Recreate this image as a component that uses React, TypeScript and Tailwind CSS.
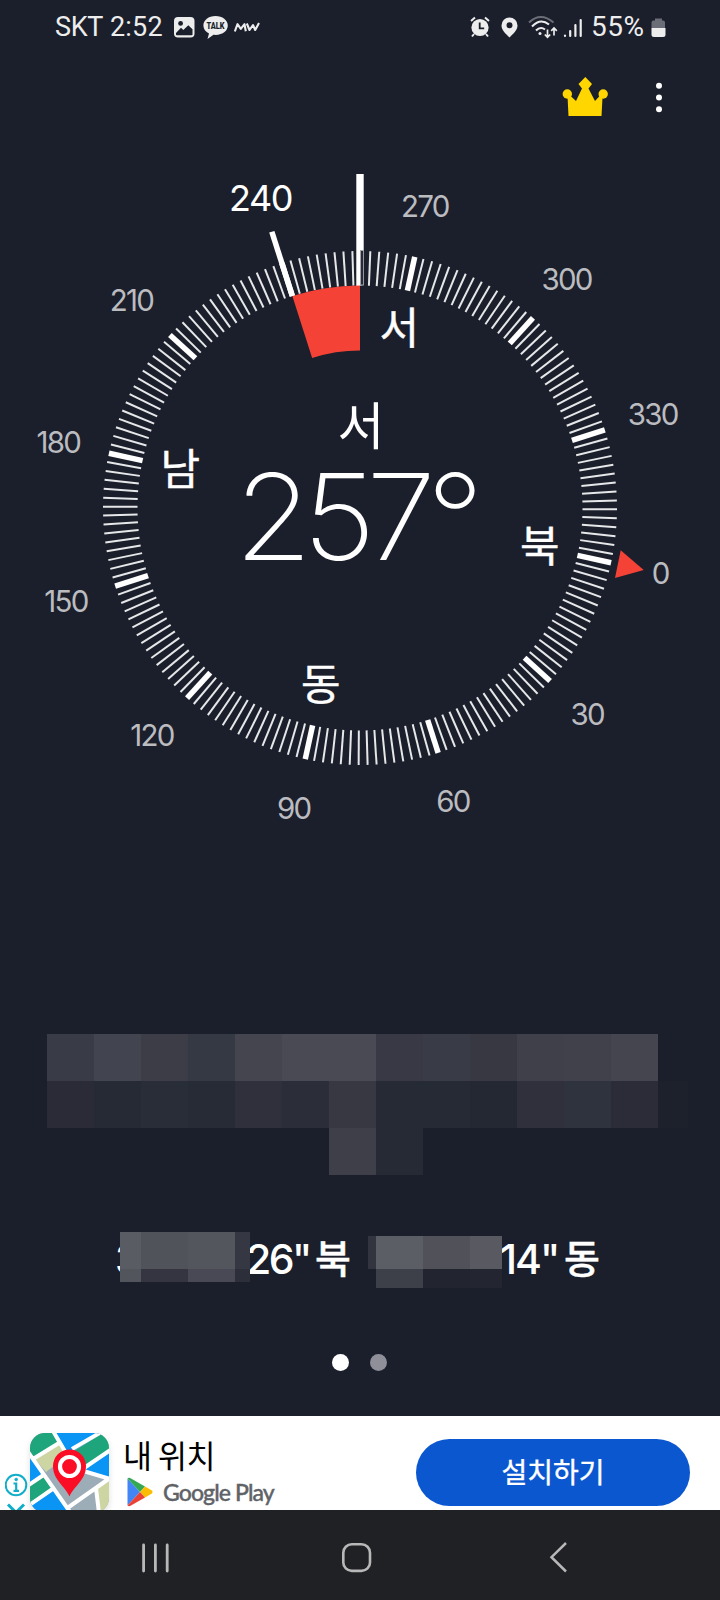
const CX = 360;
const CY = 368;
const HEADING = 257.7;
const MARKED = 240;

const OUTER = 257;
const INNER = 222.5;

function polar(deg: number, r: number): [number, number] {
  const rad = ((deg - HEADING) * Math.PI) / 180;
  return [CX + r * Math.sin(rad), CY - r * Math.cos(rad)];
}

const directions = [
  { deg: 0, name: "북", baseline: 15 },
  { deg: 90, name: "동", baseline: 12.5 },
  { deg: 180, name: "남", baseline: 16 },
  { deg: 270, name: "서", baseline: 15.5 },
];

const addressTop = [
  "bg-[#393c46]", "bg-[#42454f]", "bg-[#3d3d48]", "bg-[#353943]", "bg-[#44454f]",
  "bg-[#494a54]", "bg-[#494a54]", "bg-[#383944]", "bg-[#393c46]", "bg-[#373842]",
  "bg-[#3f404a]", "bg-[#40414b]", "bg-[#44454f]",
];

const addressMiddle = [
  "bg-[#2b2b38]", "bg-[#262a34]", "bg-[#292d37]", "bg-[#272b36]", "bg-[#2f303b]",
  "bg-[#2b2e38]", "bg-[#373842]", "bg-[#262a34]", "bg-[#262a34]", "bg-[#242833]",
  "bg-[#2f303c]", "bg-[#2f333d]", "bg-[#2c2c39]",
];

function StatusBar() {
  return (
    <header className="flex h-[54px] items-center pl-[55px] pr-[54px] font-['Roboto','Noto_Sans_CJK_KR',sans-serif] text-[27px] text-[#ededed]">
      <span className="w-[55px] whitespace-nowrap tracking-[-0.3px]">SKT</span>
      <span className="w-[63px] whitespace-nowrap tracking-[0.2px]">2:52</span>
      <svg width="22" height="22" viewBox="0 0 22 22" className="mr-2">
        <rect x="1" y="1" width="20.5" height="20.5" rx="4" fill="#ededed" />
        <circle cx="7.6" cy="7.4" r="2.4" fill="#1b1f2b" />
        <path d="M3 17l5-5.200 2.300 2.200 5-4.800 4.200 4v5.300q0 .8-.8.8H3.800Q3 19.300 3 18.500z" fill="#1b1f2b" />
      </svg>
      <svg width="26" height="25" viewBox="0 0 26 25" className="mr-[5px]">
        <path d="M12.500 1C5.500 1 .4 5.200.4 10.500c0 3.400 2.200 6.300 5.600 8L4.500 24l6-4.200c9 .8 14.300-4 14.300-9.300C24.800 5.200 19.500 1 12.500 1z" fill="#ededed" />
        <text x="12.600" y="13.800" textAnchor="middle" fontSize="8.500" fontWeight="900" fill="#1b1f2b" textLength="18" lengthAdjust="spacingAndGlyphs">TALK</text>
      </svg>
      <svg width="26" height="12" viewBox="0 0 26 12" fill="none" stroke="#ededed" strokeWidth="2.100" strokeLinejoin="round">
        <path d="M.8 10.500L3.500 3.200l3.300 4.600 3.700-4.600 1.300 7" />
        <path d="M12.800 2.500l2.700 6.500 3.500-5 2.200 5L25 2" />
      </svg>

      <div className="ml-auto flex items-center">
        <svg width="20" height="22" viewBox="0 0 20 22" className="mr-[11px]">
          <path d="M1 5l4-3.500M19 5l-4-3.500M4 18l-2 2.500M16 18l2 2.500" stroke="#ededed" strokeWidth="2" />
          <circle cx="10" cy="11.500" r="8.600" fill="#ededed" />
          <path d="M9.700 6.500v5.800h4.500" stroke="#1b1f2b" strokeWidth="1.800" fill="none" />
        </svg>
        <svg width="17" height="21" viewBox="0 0 17 21" className="mr-[9px]">
          <path fillRule="evenodd" d="M8.500.5A8 8 0 00.5 8.500C.5 13 4.500 16.500 8.500 20.500c4-4 8-7.500 8-12a8 8 0 00-8-8zm0 4.800a3 3 0 110 6 3 3 0 010-6z" fill="#ededed" />
        </svg>
        <svg width="32" height="24" viewBox="0 0 32 24" className="mr-[4px]" fill="none" strokeWidth="2">
          <path d="M2 7.500Q13.500-3.500 26.500 7.500" stroke="#6c6e77" />
          <path d="M5 11.500Q13.500 2.500 22 9.500M9 15.500q4.500-4.500 9-1" stroke="#ededed" />
          <circle cx="13" cy="18.500" r="1.500" fill="#ededed" />
          <path d="M20.500 14.500v7.500M17.800 19.500l2.700 2.700 2.700-2.700M27 20.500v-7.500M24.200 15.800l2.800-2.800 2.800 2.800" stroke="#ededed" strokeWidth="1.700" />
        </svg>
        <svg width="20" height="21" viewBox="0 0 20 21" className="mr-[8px]" stroke="#ededed" strokeWidth="2.200" strokeLinecap="round">
          <path d="M2 18.500v.5M7.200 14v5M12.400 8v11M17.700 3v16" />
        </svg>
        <span className="w-[60px] whitespace-nowrap text-[28px] tracking-[0.5px]">55%</span>
        <svg width="15" height="21" viewBox="0 0 15 21">
          <path d="M4 1.500h7v2h1a2 2 0 012 2V11H.5V5.500a2 2 0 012-2H4z" fill="#6c6e77" />
          <path d="M.5 11h14v6.500a2.500 2.500 0 01-2.500 2.500H3a2.500 2.500 0 01-2.500-2.500z" fill="#ededed" />
        </svg>
      </div>
    </header>
  );
}

function Toolbar() {
  return (
    <div className="flex h-[86px] items-start justify-end pr-[57px] pt-[22px]">
      <svg width="46" height="42" viewBox="0 0 46 42" fill="#ffd600">
        <path d="M23.300 1l6.700 7-3.500 4.500L33 25l6-6.500 1.500 3-1 18.500H6.500L5.500 20l1.500-1.500L14 25l6-12.500L16.500 8z" />
        <circle cx="5.300" cy="18" r="4.700" />
        <circle cx="41.200" cy="18" r="4.700" />
      </svg>
      <svg width="8" height="40" viewBox="0 0 8 40" className="ml-[47px]" fill="#fff">
        <circle cx="4" cy="9.700" r="3" />
        <circle cx="4" cy="21.500" r="3" />
        <circle cx="4" cy="33.200" r="3" />
      </svg>
    </div>
  );
}

function Dial() {
  const ticks = Array.from({ length: 180 }, (_, i) => i * 2);
  const labels = Array.from({ length: 12 }, (_, i) => i * 30);
  const [ax, ay] = polar(MARKED, INNER);
  const [bx, by] = polar(MARKED, 157.4);
  const [mx1, my1] = polar(MARKED, 290);
  const [mx2, my2] = polar(MARKED, INNER);

  return (
    <svg
      width="720"
      height="720"
      viewBox="0 0 720 720"
      className="shrink-0 font-['Inter','Noto_Sans_CJK_KR',sans-serif]"
    >
      {ticks.map((deg) => {
        const major = deg % 30 === 0;
        const [x1, y1] = polar(deg, INNER);
        const [x2, y2] = polar(deg, OUTER);
        return (
          <line
            key={deg}
            x1={x1}
            y1={y1}
            x2={x2}
            y2={y2}
            stroke={major ? "#fff" : "#e6e7e9"}
            strokeWidth={major ? 5.5 : 2}
          />
        );
      })}

      {/* Heading line, inverted where it crosses the nearest tick */}
      <rect x="356.300" y="34" width="7.400" height="77" fill="#fff" />
      <rect x="356.300" y="111" width="4" height="35" fill="#fff" />
      <rect x="360.600" y="110.500" width="2.800" height="34.500" fill="#1b1f2b" stroke="#a3a5ab" />

      <path
        d={`M${ax} ${ay}A${INNER} ${INNER} 0 0 1 ${CX} ${CY - INNER}V${CY - 157.4}A157.4 157.4 0 0 0 ${bx} ${by}Z`}
        fill="#f44336"
      />
      <line x1={mx1} y1={my1} x2={mx2} y2={my2} stroke="#fff" strokeWidth="5.500" />
      <path d="M620.700 410.300L643.700 430 615 438z" fill="#f44336" />

      {labels.map((deg) => {
        const marked = deg === MARKED;
        const [x, y] = polar(deg, marked ? 325 : 308);
        return (
          <text
            key={deg}
            x={x - 0.7}
            y={y + (marked ? 13 : 10.2)}
            textAnchor="middle"
            fontSize={marked ? 36 : 29.5}
            letterSpacing={marked ? -1.4 : -1.7}
            fill={marked ? "#fff" : "#bbbcc0"}
          >
            {deg}
          </text>
        );
      })}

      {directions.map(({ deg, name, baseline }) => {
        const [x, y] = polar(deg, 184);
        return (
          <text key={deg} x={x} y={y + baseline} textAnchor="middle" fontSize="43" fill="#fff" stroke="#fff" strokeWidth="0.400">
            {name}
          </text>
        );
      })}

      <text x="361" y="305" textAnchor="middle" fontSize="51" fill="#fff">
        서
      </text>
      <text
        transform="translate(234.500 420) scale(1.050 1)"
        fontSize="120"
        fontWeight="200"
        letterSpacing="-9"
        fill="#fff"
      >
        257°
      </text>
    </svg>
  );
}

function Address() {
  return (
    <div className="mt-[174px] flex h-[141px] flex-col pl-[47px]">
      <div className="flex">
        {addressTop.map((color, i) => (
          <div key={i} className={`size-[47px] ${color}`} />
        ))}
      </div>
      <div className="flex">
        {addressMiddle.map((color, i) => (
          <div key={i} className={`size-[47px] ${color}`} />
        ))}
        <div className="h-[47px] w-[30px] bg-[#1d212c]" />
      </div>
      <div className="flex pl-[282px]">
        <div className="size-[47px] bg-[#3f3f4a]" />
        <div className="size-[47px] bg-[#262a34]" />
      </div>
    </div>
  );
}

function Coordinates() {
  return (
    <div className="mt-[57px] flex h-[56px] pl-[115px] font-['Inter','Noto_Sans_CJK_KR',sans-serif] text-[41px] font-medium leading-[54px] text-white">
      <div className="flex w-[5px] justify-start overflow-hidden">
        <span>3</span>
      </div>
      <div className="grid h-[50px] grid-cols-[21px_47px_47px_15px] grid-rows-[37px_13px]">
        <div className="bg-[#5a5c64]" />
        <div className="bg-[#51535b]" />
        <div className="bg-[#54565e]" />
        <div className="bg-[#353742]" />
        <div className="bg-[#53555d]" />
        <div className="bg-[#343541]" />
        <div className="bg-[#484954]" />
        <div className="bg-[#2c2e39]" />
      </div>
      <div className="flex w-[118px] overflow-hidden whitespace-nowrap">
        <span className="-ml-[4px] w-[69px] tracking-[-2.6px]">26"</span>
        <span className="text-[39px] [-webkit-text-stroke:0.4px_white]">북</span>
      </div>
      <div className="mt-1 grid h-[52px] grid-cols-[8px_47px_47px_32px] grid-rows-[33px_19px]">
        <div className="bg-[#32343f]" />
        <div className="bg-[#5c5e66]" />
        <div className="bg-[#505159]" />
        <div className="bg-[#585961]" />
        <div />
        <div className="bg-[#3d3f49]" />
        <div className="bg-[#22252f]" />
        <div className="bg-[#232631]" />
      </div>
      <div className="flex overflow-hidden whitespace-nowrap">
        <span className="-ml-[2px] w-[64px] tracking-[-2px]">14"</span>
        <span className="text-[39px] [-webkit-text-stroke:0.4px_white]">동</span>
      </div>
    </div>
  );
}

function AppIcon() {
  return (
    <svg width="80" height="78" viewBox="0 0 80 78" className="shrink-0 drop-shadow-md">
      <defs>
        <clipPath id="tile">
          <rect width="79" height="80" rx="15" />
        </clipPath>
      </defs>
      <g clipPath="url(#tile)">
        <rect width="80" height="80" fill="#9cadb8" />
        <path d="M0 0h23l5 10L3 26 0 22z" fill="#1fa57b" />
        <path d="M23 0h50L40 20 30 14z" fill="#0a95f5" />
        <path d="M73 0h7v18L54 36 44 18z" fill="#1fa57b" />
        <path d="M80 17v29L55 37z" fill="#0a95f5" />
        <path d="M4 25l24-15 10 12-22 17z" fill="#cdd6a2" />
        <path d="M0 22l14 20L0 51z" fill="#0a95f5" />
        <path d="M0 52l14-9 10 13L0 72z" fill="#1fa57b" />
        <path d="M0 71l24-15 14 22v3H0z" fill="#0a95f5" />
        <path d="M66 55l14-10v35H69z" fill="#cdd6a2" />
        <g stroke="#fff" strokeWidth="4" fill="none">
          <path d="M-2 19l42 60M23-2l13 22M3 26l26-16M-2 52.500L15 41M-2 73l26-18" />
          <path d="M42 16L73-2M54 35l28-19M50 37l30 9M80 45L36 76M66 55l3 25" />
        </g>
        <path d="M39.500 63.500C35 53 23 47 23 33a16.500 16.500 0 0133 0c0 14-12 20-16.500 30.500z" fill="#fa0d25" />
        <circle cx="39.500" cy="33.500" r="9.500" fill="#fa0d25" stroke="#fff" strokeWidth="4.200" />
      </g>
    </svg>
  );
}

function AdBanner() {
  return (
    <div className="flex h-[94px] shrink-0 overflow-hidden bg-white pl-[5px]">
      <svg width="25" height="37" viewBox="0 0 25 37" className="mt-[57px] shrink-0" fill="none" stroke="#12aec9" strokeWidth="2">
        <circle cx="11" cy="12" r="10.300" />
        <path d="M8.500 10.500h2.700v7M8.500 17.800h5.500" strokeWidth="2.200" />
        <circle cx="11.200" cy="6.500" r="1.300" fill="#12aec9" strokeWidth="1" />
        <path d="M3 31.500l8 8 8-8" strokeWidth="3" />
      </svg>
      <div className="flex pt-[17px]">
        <AppIcon />
      </div>
      <div className="ml-[13px] flex w-[293px] flex-col pt-[17px]">
        <p className="h-[44px] whitespace-nowrap font-['Noto_Sans_CJK_KR',sans-serif] text-[31.5px] leading-[42px] tracking-[-0.5px] text-black">
          내 위치
        </p>
        <div className="flex items-center pl-[3px]">
          <svg width="28" height="30" viewBox="0 0 28 30">
            <path d="M1.500 1.500v27L14 15z" fill="#4285f4" />
            <path d="M1.500 1.500Q3 .2 5 1.500l14 8L14 15z" fill="#34a853" />
            <path d="M19 9.500l6.500 3.700q2 1.800 0 3.600L19 20.500 14 15z" fill="#fbbc04" />
            <path d="M1.500 28.500q1.500 1.300 3.500 0l14-8L14 15z" fill="#ea4335" />
          </svg>
          <span className="ml-[9px] whitespace-nowrap font-['Lato',sans-serif] text-[23px] font-medium leading-[30px] tracking-[-0.9px] text-[#5f6368] [-webkit-text-stroke:0.4px_#5f6368]">
            Google Play
          </span>
        </div>
      </div>
      <button className="mt-[23px] flex h-[67px] w-[274px] shrink-0 items-center justify-center rounded-full bg-[#0b57d0] pb-[4px] font-['Noto_Sans_CJK_KR',sans-serif] text-[28px] text-white [-webkit-text-stroke:0.4px_white]">
        설치하기
      </button>
    </div>
  );
}

function NavBar() {
  return (
    <nav className="flex h-[90px] shrink-0 items-center bg-[#202124] pl-[141px] pt-[5px]">
      <svg width="30" height="32" viewBox="0 0 30 32" stroke="#b8b8b9" strokeWidth="2.800" strokeLinecap="round">
        <path d="M2.600 3v26M14.400 3v26M26.200 3v26" />
      </svg>
      <svg width="32" height="32" viewBox="0 0 32 32" className="ml-[170px]" fill="none" stroke="#b8b8b9" strokeWidth="2.600">
        <rect x="2.300" y="2.300" width="26.700" height="26.600" rx="8.500" />
      </svg>
      <svg width="20" height="32" viewBox="0 0 20 32" className="ml-[176px]" fill="none" stroke="#b8b8b9" strokeWidth="2.500">
        <path d="M17 1L2.500 15.200 17 29.500" />
      </svg>
    </nav>
  );
}

export default function App() {
  return (
    <div className="flex h-[1600px] w-[720px] flex-col overflow-hidden bg-[#1b1f2b]">
      <StatusBar />
      <Toolbar />
      <Dial />
      <Address />
      <Coordinates />
      {/* Page indicator */}
      <div className="flex flex-1 items-start justify-center gap-[21px] pr-[1px] pt-[66px]">
        <span className="size-[17px] rounded-full bg-white" />
        <span className="size-[17px] rounded-full bg-[#8f8f99]" />
      </div>
      <AdBanner />
      <NavBar />
    </div>
  );
}
